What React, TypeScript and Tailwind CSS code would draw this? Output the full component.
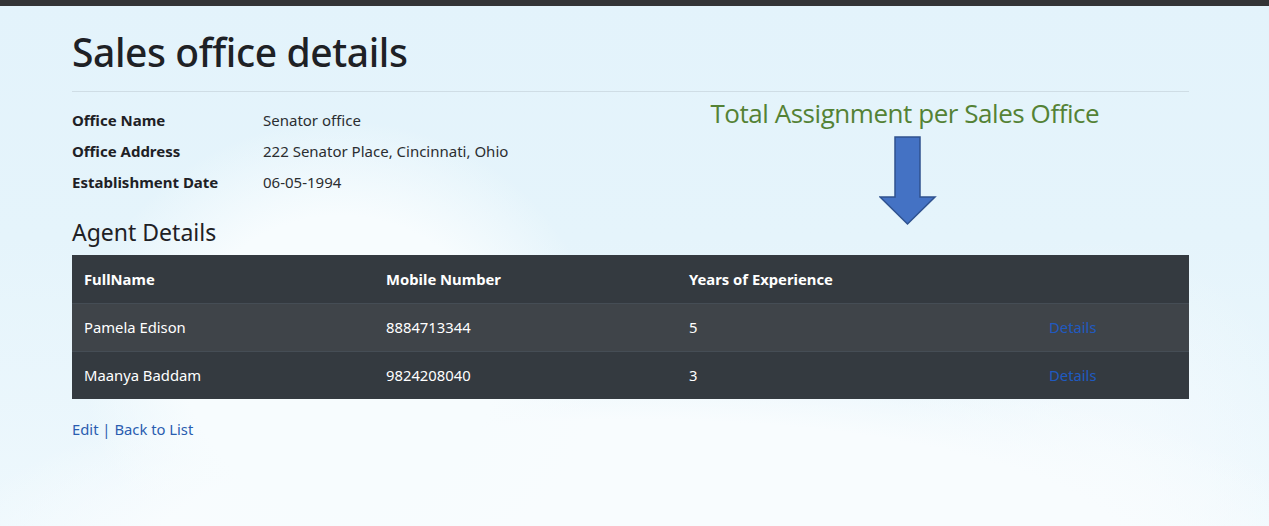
import React from 'react';

const agents = [
  { name: 'Pamela Edison', mobile: '8884713344', years: 5 },
  { name: 'Maanya Baddam', mobile: '9824208040', years: 3 },
];

const office = [
  ['Office Name', 'Senator office'],
  ['Office Address', '222 Senator Place, Cincinnati, Ohio'],
  ['Establishment Date', '06-05-1994'],
];

export default function App() {
  return (
    <div
      className="min-h-[526px] w-full flex flex-col text-[#212529] bg-[radial-gradient(ellipse_260px_240px_at_340px_360px,#f7fcfe_0%,#f7fcfe_60%,transparent_100%),radial-gradient(ellipse_700px_200px_at_640px_560px,#f8fcfe_0%,#f8fcfe_70%,transparent_100%),radial-gradient(ellipse_220px_260px_at_1100px_500px,#f6fbfe_0%,transparent_100%),linear-gradient(180deg,#e3f3fb_0%,#e5f4fb_45%,#eef8fd_100%)]"
      style={{ fontFamily: '"Noto Sans", "Open Sans", sans-serif' }}
    >
      {/* top bar */}
      <div className="h-[6px] bg-[#333436] shrink-0" />

      <div className="mx-[72px] mr-[80px] pt-[22px]">
        <h1 className="text-[39px] leading-[48px] font-medium text-[#1e2125] tracking-[-0.4px]">Sales office details</h1>
        <hr className="mt-[15px] border-t border-[#cfdde5]" />

        <div className="flex mt-[18px]">
          <dl className="flex flex-col gap-[10px] text-[15px] leading-[21px]">
            {office.map(([label, value]) => (
              <div key={label} className="flex">
                <dt className="w-[191px] font-bold text-[#1e2125]">{label}</dt>
                <dd className="text-[#2b2e31]">{value}</dd>
              </div>
            ))}
          </dl>

          {/* annotation */}
          <div className="ml-[202px] -mt-[14px] flex flex-col items-center w-[389px]">
            <div
              className="text-[26px] leading-[34px] text-[#548235] whitespace-nowrap"
              style={{ fontFamily: '"Open Sans", "Noto Sans", sans-serif', letterSpacing: '-0.45px' }}
            >
              Total Assignment per Sales Office
            </div>
            <svg width="58" height="90" viewBox="0 0 58 90" className="mt-[6px] ml-[6px]">
              <path
                d="M16 1 H41 V61 H56 L28.5 88 L1 61 H16 Z"
                fill="#4472c4"
                stroke="#2f528f"
                strokeWidth="1.5"
              />
            </svg>
          </div>
        </div>

        <h2 className="text-[23px] leading-[30px] -mt-[9px] text-[#1e2125]">Agent Details</h2>

        <table className="w-full mt-[8px] text-[14.8px] text-white border-collapse">
          <thead>
            <tr className="bg-[#343a40]">
              <th className="text-left font-bold px-[12px] h-[48px] w-[302px]">FullName</th>
              <th className="text-left font-bold px-[12px] w-[303px]">Mobile Number</th>
              <th className="text-left font-bold px-[12px] w-[360px]">Years of Experience</th>
              <th className="px-[12px]" />
            </tr>
          </thead>
          <tbody>
            {agents.map((a, i) => (
              <tr
                key={a.name}
                className={`border-t border-[#454d55] ${i % 2 === 0 ? 'bg-[#3f4449]' : 'bg-[#343a40]'}`}
              >
                <td className="px-[12px] h-[48px]">{a.name}</td>
                <td className="px-[12px]">{a.mobile}</td>
                <td className="px-[12px]">{a.years}</td>
                <td className="px-[12px]">
                  <a href="#" className="text-[#1f5ac0]">Details</a>
                </td>
              </tr>
            ))}
          </tbody>
        </table>

        <div className="mt-[19px] text-[14.8px] text-[#2a5db0]">
          <a href="#">Edit</a> <span className="text-[#2a5db0]">|</span> <a href="#">Back to List</a>
        </div>
      </div>
    </div>
  );
}
